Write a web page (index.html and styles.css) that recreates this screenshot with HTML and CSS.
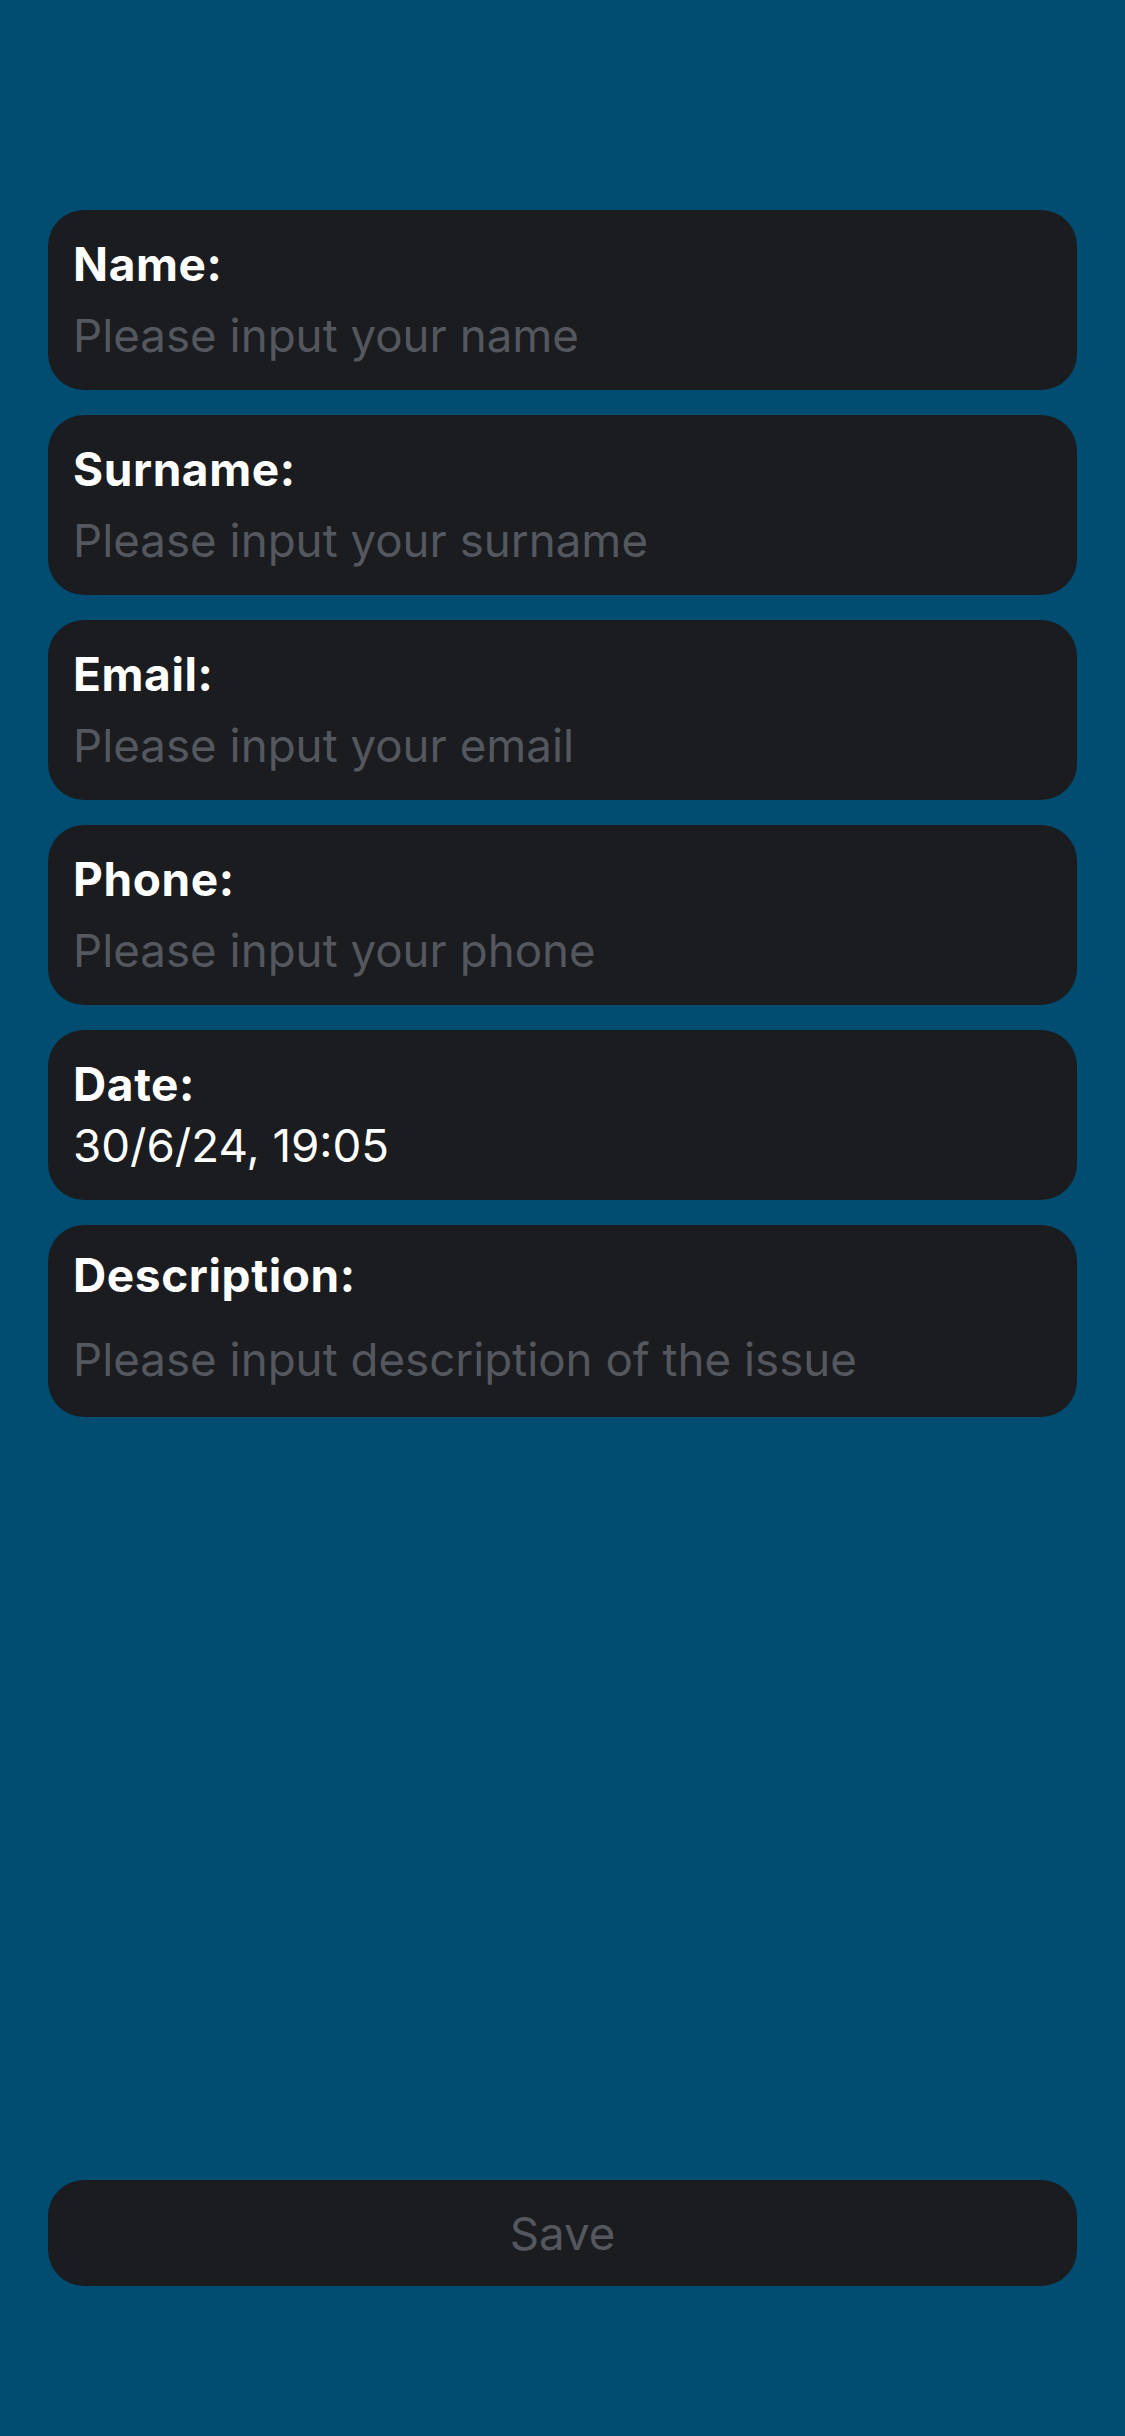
FILE: index.html
```html
<!DOCTYPE html>
<html lang="en">
<head>
<meta charset="utf-8">
<title>Issue form</title>
<link rel="stylesheet" href="styles.css">
</head>
<body>
<main class="screen">
  <form class="form">
    <label class="card">
      <span class="label">Name:</span>
      <input class="field" type="text" placeholder="Please input your name">
    </label>
    <label class="card">
      <span class="label">Surname:</span>
      <input class="field" type="text" placeholder="Please input your surname">
    </label>
    <label class="card">
      <span class="label">Email:</span>
      <input class="field" type="text" placeholder="Please input your email">
    </label>
    <label class="card">
      <span class="label">Phone:</span>
      <input class="field" type="text" placeholder="Please input your phone">
    </label>
    <div class="card card-date">
      <span class="label">Date:</span>
      <span class="value">30/6/24, 19:05</span>
    </div>
    <label class="card card-desc">
      <span class="label">Description:</span>
      <textarea class="field area" rows="1" placeholder="Please input description of the issue"></textarea>
    </label>
  </form>
  <div class="spacer"></div>
  <button class="save" type="button">Save</button>
</main>
</body>
</html>
```
FILE: styles.css
```css
* { box-sizing: border-box; }

html, body {
  margin: 0;
  padding: 0;
  background: #014c71;
}

body {
  font-family: Inter, "Noto Sans", "Liberation Sans", sans-serif;
  color: #ffffff;
}

.screen {
  min-height: 2436px;
  display: flex;
  flex-direction: column;
  padding: 210px 48px 150px;
}

.form {
  display: flex;
  flex-direction: column;
  gap: 25px;
  margin: 0;
}

.card {
  display: flex;
  flex-direction: column;
  gap: 16px;
  background: #1a1c20;
  border-radius: 36px;
  padding: 26px 25px;
}

.label {
  font-size: 46px;
  line-height: 56px;
  height: 56px;
  font-weight: 700;
  letter-spacing: 0.6px;
  color: #ffffff;
}

.field {
  display: block;
  width: 100%;
  height: 56px;
  margin: 0;
  padding: 0;
  border: none;
  outline: none;
  background: transparent;
  font-family: inherit;
  font-size: 45.7px;
  line-height: 56px;
  font-weight: 400;
  color: #ffffff;
}

.field::placeholder {
  color: #54585e;
  opacity: 1;
}

.card-date {
  gap: 6px;
}

.value {
  font-size: 45.7px;
  line-height: 56px;
  height: 56px;
  font-weight: 400;
  color: #ffffff;
}

.card-desc {
  padding: 22px 25px 29px;
  gap: 29px;
}

.area {
  resize: none;
  overflow: hidden;
}

.spacer {
  flex: 1;
}

.save {
  height: 106px;
  width: 100%;
  border: none;
  border-radius: 36px;
  background: #1a1c20;
  font-family: inherit;
  font-size: 45.7px;
  font-weight: 400;
  color: #54585e;
  padding: 0;
}
```
